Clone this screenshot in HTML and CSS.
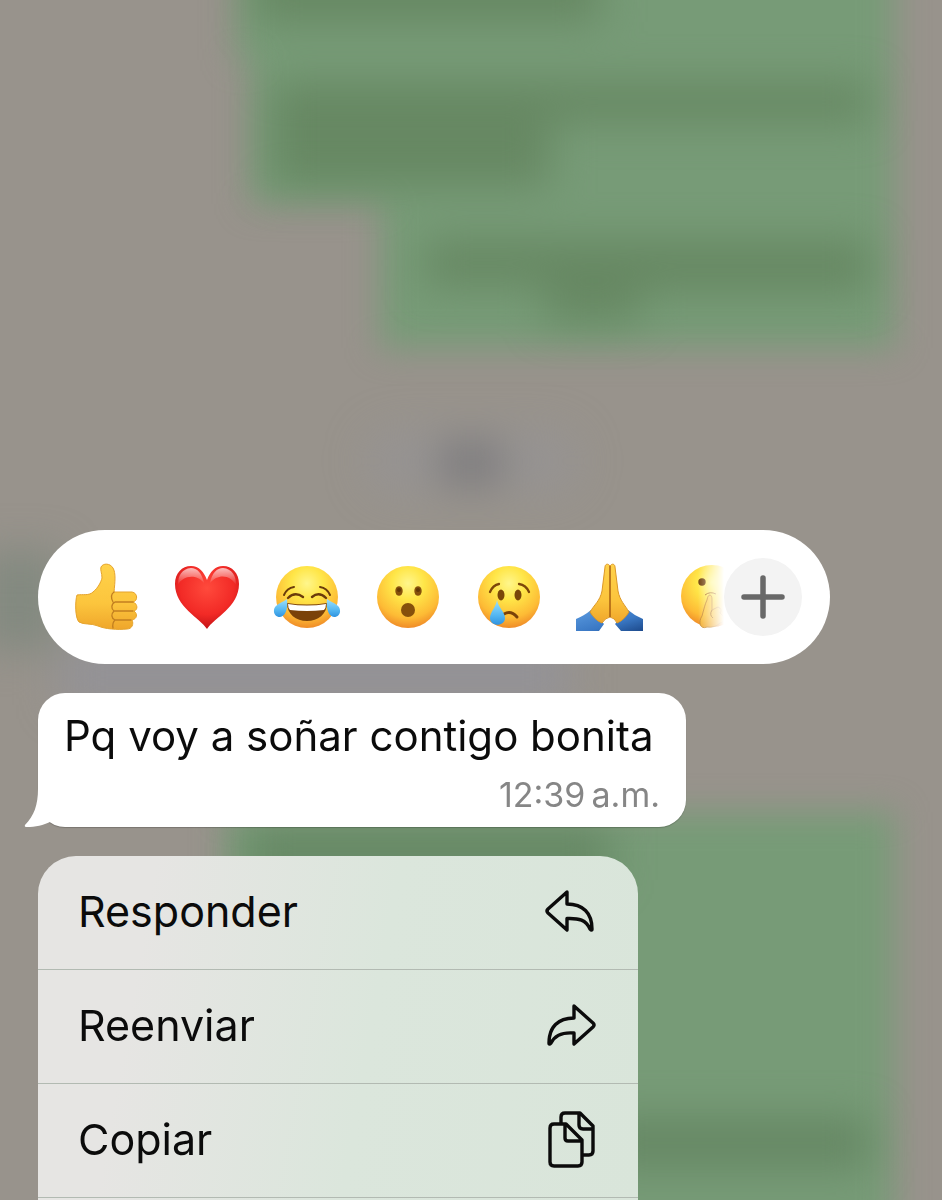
FILE: index.html
```html
<!DOCTYPE html>
<html lang="es">
<head>
<meta charset="utf-8">
<meta name="viewport" content="width=device-width, initial-scale=1">
<title>Chat</title>
<link rel="stylesheet" href="styles.css">
</head>
<body>
<svg class="backdrop" viewBox="0 0 942 1200" preserveAspectRatio="xMidYMin slice" aria-hidden="true">
  <defs>
    <filter id="soft" x="-30%" y="-30%" width="160%" height="160%" color-interpolation-filters="sRGB"><feGaussianBlur stdDeviation="16"/></filter>
    <filter id="softer" x="-60%" y="-100%" width="220%" height="300%" color-interpolation-filters="sRGB"><feGaussianBlur stdDeviation="20"/></filter>
    <radialGradient id="face" cx=".5" cy=".28" r=".74"><stop offset="0" stop-color="#fff68c"/><stop offset=".35" stop-color="#ffe648"/><stop offset=".75" stop-color="#fdbb35"/><stop offset="1" stop-color="#ee8626"/></radialGradient>
    <linearGradient id="skin" x1="0" y1="0" x2="0" y2="1"><stop offset="0" stop-color="#ffd24a"/><stop offset=".6" stop-color="#fcc53d"/><stop offset="1" stop-color="#efa62b"/></linearGradient>
    <linearGradient id="tear" x1="0" y1="0" x2="0" y2="1"><stop offset="0" stop-color="#9ee0fb"/><stop offset=".6" stop-color="#55b8f2"/><stop offset="1" stop-color="#2f93e0"/></linearGradient>
    <radialGradient id="heart" cx=".5" cy=".35" r=".7"><stop offset="0" stop-color="#ff4a3c"/><stop offset=".6" stop-color="#f22a26"/><stop offset="1" stop-color="#b90d12"/></radialGradient>
    <linearGradient id="shine" x1="0" y1="0" x2="0" y2="1"><stop offset="0" stop-color="#fff" stop-opacity=".7"/><stop offset="1" stop-color="#fff" stop-opacity="0"/></linearGradient>
    <linearGradient id="sleeve" x1="0" y1="0" x2="1" y2="1"><stop offset="0" stop-color="#5b9be0"/><stop offset=".6" stop-color="#3a78c4"/><stop offset="1" stop-color="#1d4a8c"/></linearGradient>
  </defs>
  <rect width="942" height="1200" fill="#98938c"/>
  <g filter="url(#soft)">
    <path fill="#779b77" d="M236-60H894V348H380V204H250V60H236Z"/>
    <path fill="#779b77" d="M226 812H894V1260H226Z"/>
  </g>
  <g filter="url(#softer)">
    <path fill="#64855f" opacity=".85" d="M255-40H600V22H255ZM272 82H870V122H550V186H272ZM425 240H870V292H640V322H545V286H425Z"/>
    <path fill="#648562" opacity=".9" d="M248 828H610V880H248ZM600 1118H870V1168H600Z"/>
    <rect x="365" y="428" width="215" height="66" rx="30" fill="#94949a" opacity=".4"/>
    <rect x="440" y="442" width="62" height="42" fill="#7a797a" opacity=".9"/>
    <rect x="-20" y="550" width="80" height="100" fill="#748478" opacity=".6"/>
    <rect x="60" y="645" width="510" height="60" fill="#92929a" opacity=".8"/>
  </g>
</svg>

<main class="screen">
  <section class="reactions" aria-label="Reacciones">
    <div class="strip">
      <button class="emoji" aria-label="Me gusta"><svg viewBox="0 0 68 68">
        <path fill="url(#skin)" stroke="#e5a32c" d="M5 32C11 31 17 33 21 29C26 25 29 19 30 15C30 10 28 7 29 4C31 0 38 0 41 5C44 10 43 19 42 29L60 29C66 30 66 38 61 39C66 41 66 47 62 48C66 51 65 56 60 57C62 61 60 66 55 66C45 67 33 66 26 63C19 60 12 62 7 59C3 55 3 38 5 32Z"/>
        <path fill="none" stroke="#c27f20" stroke-width="1.3" stroke-linecap="round" d="M42 29C39 31 39 35 41 39M61 39H43C39 41 39 46 42 48H61M42 48C39 51 39 55 43 57H59M43 57Q40 60 41 65"/>
      </svg></button>
      <button class="emoji" aria-label="Me encanta"><svg viewBox="0 0 68 68">
        <path fill="url(#heart)" d="M34 66C27 55 2 44 2 21C2 10 9 3 18 3C26 3 31 9 34 17C37 9 42 3 50 3C59 3 66 10 66 21C66 44 41 55 34 66Z"/>
        <path fill="url(#shine)" d="M18 5C9 6 5 12 5 22C9 13 23 10 31 20C29 10 24 5 18 5ZM50 5C59 6 63 12 63 22C58 12 45 10 37 20C39 10 44 5 50 5Z"/>
      </svg></button>
      <button class="emoji" aria-label="Me divierte"><svg viewBox="0 0 68 68">
        <circle cx="34" cy="34" r="31" fill="url(#face)"/>
        <path fill="#7a4209" d="M14 40Q34 43 54 40C54 51 45 58 34 58S14 51 14 40Z"/>
        <path fill="#fff" d="M15 41Q34 44 53 41Q53 45 51 47Q34 49 17 47Q15 45 15 41Z"/>
        <path fill="none" stroke="#6b3b0b" stroke-width="2.4" stroke-linecap="round" d="M15 35Q22 28 30 34M39 34Q46 28 53 35"/>
        <path fill="none" stroke="#6b3b0b" stroke-width="2" stroke-linecap="round" d="M11 32Q14 25 21 24M47 24Q54 25 57 32"/>
        <path fill="url(#tear)" d="M14 36C15 45 13 53 7 54C1 54-1 47 3 43C6 40 10 39 14 36ZM54 36C53 45 55 53 61 54C67 54 69 47 65 43C62 40 58 39 54 36Z"/>
      </svg></button>
      <button class="emoji" aria-label="Me asombra"><svg viewBox="0 0 68 68">
        <circle cx="34" cy="34" r="31" fill="url(#face)"/>
        <g fill="#86500b"><ellipse cx="25" cy="28" rx="3.700" ry="4.800"/><ellipse cx="44" cy="28" rx="3.700" ry="4.800"/><circle cx="34" cy="47" r="7"/></g>
        <g fill="#633706"><circle cx="25" cy="27" r="2"/><circle cx="44" cy="27" r="2"/></g>
      </svg></button>
      <button class="emoji" aria-label="Me entristece"><svg viewBox="0 0 68 68">
        <circle cx="34" cy="34" r="31" fill="url(#face)"/>
        <g fill="#7a4609"><ellipse cx="26" cy="32" rx="3.500" ry="5.400"/><ellipse cx="43" cy="32" rx="3.500" ry="5.400"/></g>
        <path fill="none" stroke="#7d4709" stroke-width="2.300" stroke-linecap="round" d="M15 29Q18 22 24 21M44 21Q51 22 54 29"/>
        <path fill="none" stroke="#7a4209" stroke-width="3" stroke-linecap="round" d="M29 51Q36 47 42 54"/>
        <path fill="url(#tear)" d="M22 37C23 44 30 49 30 55C30 64 15 64 15 55C15 49 21 44 22 37Z"/>
      </svg></button>
      <button class="emoji" aria-label="Gracias"><svg viewBox="0 0 68 68">
        <path fill="url(#sleeve)" d="M1 56Q9 53 16 47L29 61L24 68H1ZM68 56Q60 53 53 47L40 61L46 68H68Z"/>
        <path fill="url(#skin)" stroke="#dc9726" d="M35 3C33 0 30 1 30 4L27 28C25 38 19 42 15 49C18 54 22 58 27 60Q30 55 35 54Q40 55 42 60C47 58 51 54 54 49C50 42 45 38 43 28L40 4C40 1 37 0 35 3Z"/>
        <path fill="none" stroke="#a85f12" stroke-width="1.500" d="M35 3V54"/>
      </svg></button>
      <button class="emoji" aria-label="Silencio"><svg viewBox="0 0 68 68">
        <circle cx="36" cy="33" r="31" fill="url(#face)"/>
        <circle cx="26" cy="19" r="3.700" fill="#70420d"/>
        <path fill="url(#skin)" stroke="#c88a2d" d="M31 64C24 67 22 59 26 53C28 46 29 41 31 37C32 30 36 31 36 36V47L42 44Q47 46 44 50L48 54Q49 59 44 60Q39 65 31 64Z"/>
        <path fill="none" stroke="#a8640f" d="M29 32Q34 28 40 31M36 47Q33 52 37 55"/>
      </svg></button>
    </div>
    <button class="more" aria-label="Más reacciones"><svg viewBox="0 0 78 78"><path fill="none" stroke="#686868" stroke-width="5.500" stroke-linecap="round" d="M39 20V58M20 39H58"/></svg></button>
  </section>

  <article class="bubble">
    <svg class="tail" viewBox="0 0 26 40" aria-hidden="true"><path fill="#fff" d="M14 2C14 18 10 29 1 38Q0 40 3 40C11 40 20 38 26 35V2Z"/></svg>
    <p class="message">Pq voy a soñar contigo bonita</p>
    <time class="time" datetime="00:39">12:39&#8239;a.m.</time>
  </article>

  <nav class="menu" aria-label="Acciones del mensaje">
    <button class="action">Responder<svg class="icon" viewBox="0 0 56 56"><path d="M25 9L6 26Q4 28 6 30L25 47V35.500C37 35 44 37 48 46Q50 48 50 46C50 30 41 21 25 21Z"/></svg></button>
    <button class="action">Reenviar<svg class="icon" viewBox="0 0 56 56"><path d="M32 9L51 26Q53 28 51 30L32 47V36C20 35 13 38 9 46Q7 48 7 46C7 30 16 21 32 21Z"/></svg></button>
    <button class="action">Copiar<svg class="icon" viewBox="0 0 56 56"><path d="M12 13H24L40 29V51Q40 55 36 55H12Q8 55 8 51V17Q8 13 12 13ZM23 13V27Q23 30 26 30H40M19 13V6Q19 2 23 2H38L51 15V40Q51 44 47 44H40M37 2V14Q37 18 41 18H51"/></svg></button>
  </nav>
</main>
</body>
</html>
```
FILE: styles.css
```css
* {
  box-sizing: border-box;
}

body {
  margin: 0;
  background: #98938c;
  color: #0b0b0b;
  font-family: Inter, "Liberation Sans", sans-serif;
}

button {
  margin: 0;
  padding: 0;
  border: 0;
  background: none;
  color: inherit;
  font: inherit;
  cursor: pointer;
}

svg {
  display: block;
}

.backdrop {
  position: fixed;
  inset: 0;
  width: 100%;
  height: 100%;
}

.screen {
  position: relative;
  display: flex;
  flex-direction: column;
  align-items: flex-start;
  min-height: 100vh;
  padding: 530px 38px 0;
}

.reactions {
  display: flex;
  align-items: center;
  width: 100%;
  max-width: 792px;
  height: 134px;
  padding: 0 28px 0 34px;
  border-radius: 67px;
  background: #fff;
}

.strip {
  display: flex;
  flex: 1;
  justify-content: space-between;
  min-width: 0;
  overflow: hidden;
  mask-image: linear-gradient(to right, #000 calc(100% - 46px), transparent calc(100% - 20px));
}

.emoji {
  flex: none;
  width: 68px;
  height: 68px;
}

.more {
  flex: none;
  width: 78px;
  height: 78px;
  margin-left: -20px;
  border-radius: 50%;
  background: #f3f3f3;
}

.bubble {
  position: relative;
  display: flex;
  flex-direction: column;
  width: 648px;
  max-width: 100%;
  margin-top: 29px;
  padding: 16px 26px 12px;
  border-radius: 27px;
  background: #fff;
  box-shadow: 0 1px 1px rgb(0 0 0 / 20%);
}

.tail {
  position: absolute;
  bottom: 0;
  left: -14px;
  width: 26px;
  height: 40px;
}

.message {
  margin: 0;
  font-size: 42px;
  line-height: 54px;
}

.time {
  align-self: flex-end;
  margin-top: 12px;
  color: #868686;
  font-size: 34px;
  line-height: 40px;
}

.menu {
  display: flex;
  flex: 1;
  flex-direction: column;
  width: 100%;
  max-width: 600px;
  margin-top: 29px;
  border-radius: 38px 38px 0 0;
  background: linear-gradient(100deg, #e6e5e3 18%, #dbe6dc 55%, #d9e5da);
}

.action {
  display: flex;
  align-items: center;
  justify-content: space-between;
  height: 114px;
  padding: 0 40px 3px;
  border-bottom: 1px solid #b2bab2;
  font-size: 43px;
  line-height: 54px;
  text-align: left;
}

.icon {
  width: 56px;
  height: 56px;
  overflow: visible;
  fill: none;
  stroke: #0b0b0b;
  stroke-width: 3.4;
  stroke-linejoin: round;
  stroke-linecap: round;
}
```
